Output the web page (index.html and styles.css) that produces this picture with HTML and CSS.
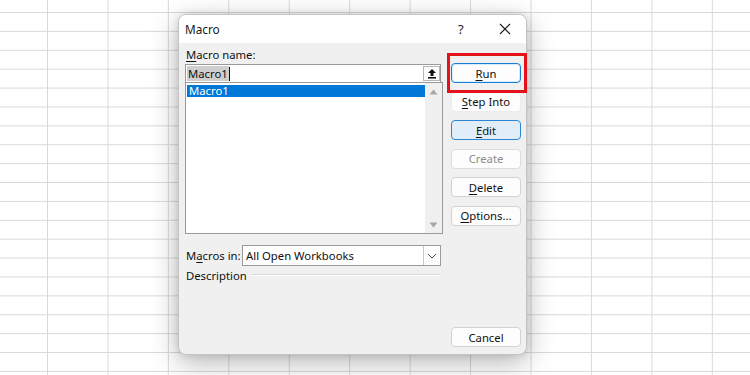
FILE: index.html
```html
<!DOCTYPE html>
<html>
<head>
<meta charset="utf-8">
<link rel="stylesheet" href="styles.css">
</head>
<body>
<div class="sheet">
  <div class="dialog">
    <div class="titlebar">
      <span class="title">Macro</span>
      <span class="help">?</span>
      <span class="close">
        <svg width="12" height="12" viewBox="0 0 12 12"><path d="M1 1 L11 11 M11 1 L1 11" stroke="#1a1a1a" stroke-width="1.1" fill="none"/></svg>
      </span>
    </div>
    <div class="body">
      <div class="left">
        <div class="label"><u>M</u>acro name:</div>
        <div class="input">
          <span class="sel">Macro1</span><span class="caret"></span>
          <span class="upbtn">
            <svg width="10" height="11" viewBox="0 0 10 11"><path d="M5 1 L1 5 H3.5 V8 H6.5 V5 H9 Z" fill="#111"/><rect x="1" y="9" width="8" height="1.6" fill="#111"/></svg>
          </span>
        </div>
        <div class="list">
          <div class="items">
            <div class="item selected">Macro1</div>
          </div>
          <div class="scroll">
            <svg width="9" height="6" viewBox="0 0 9 6"><path d="M0.5 5.5 L4.5 0.5 L8.5 5.5 Z" fill="#a6a6a6"/></svg>
            <svg width="9" height="6" viewBox="0 0 9 6"><path d="M0.5 0.5 L4.5 5.5 L8.5 0.5 Z" fill="#a6a6a6"/></svg>
          </div>
        </div>
        <div class="inrow">
          <span class="inlabel">M<u>a</u>cros in:</span>
          <div class="combo">
            <span class="combotext">All Open Workbooks</span>
            <span class="drop">
              <svg width="10" height="6" viewBox="0 0 10 6"><path d="M1 1 L5 5 L9 1" stroke="#555" stroke-width="1" fill="none"/></svg>
            </span>
          </div>
        </div>
        <div class="descrow">
          <span>Description</span>
          <span class="etch"></span>
        </div>
      </div>
      <div class="right">
        <div class="runwrap">
          <button class="btn run"><u>R</u>un</button>
          <span class="highlight"></span>
        </div>
        <button class="btn plain"><u>S</u>tep Into</button>
        <button class="btn edit"><u>E</u>dit</button>
        <button class="btn disabled">Create</button>
        <button class="btn"><u>D</u>elete</button>
        <button class="btn"><u>O</u>ptions...</button>
        <button class="btn cancel">Cancel</button>
      </div>
    </div>
  </div>
</div>
</body>
</html>
```

FILE: styles.css
```css
* { box-sizing: border-box; }
html, body { margin: 0; padding: 0; }
body {
  width: 750px;
  height: 375px;
  overflow: hidden;
  font-family: "Segoe UI", "Noto Sans", "Open Sans", sans-serif;
  font-size: 11.3px;
  color: #111;
  background-color: #fff;
  background-image:
    linear-gradient(to right, #d9d9d9 1px, transparent 1px),
    linear-gradient(to bottom, #d9d9d9 1px, transparent 1px);
  background-size: 60.45px 18.9px;
  background-position: 47px 12px;
}
.sheet {
  padding: 14px 0 0 178px;
}
.dialog {
  width: 349px;
  height: 341px;
  background: #f0f0f0;
  border: 1px solid #c4c4c4;
  border-radius: 8px;
  box-shadow: 0 8px 28px rgba(0,0,0,0.28), 0 0 8px rgba(0,0,0,0.12);
  display: flex;
  flex-direction: column;
}
.titlebar {
  height: 28px;
  background: #fff;
  border-radius: 7px 7px 0 0;
  display: flex;
  align-items: center;
  padding-left: 6px;
  flex: none;
}
.title { flex: 1; font-size: 11.8px; color: #1a1a1a; }
.help { width: 10px; font-size: 13px; margin-right: 31px; color: #1a1a1a; }
.close { width: 12px; height: 12px; margin-right: 15px; display: flex; }
.body {
  flex: 1;
  display: flex;
  padding: 0 5px 7px 6px;
  gap: 8px;
}
.left {
  width: 258px;
  display: flex;
  flex-direction: column;
}
.label {
  height: 16px;
  line-height: 16px;
  margin-top: 4px;
  margin-bottom: 1px;
  padding-left: 1px;
}
u { text-decoration-thickness: 1px; text-underline-offset: 2px; }
.input {
  width: 256px;
  height: 19px;
  background: #fff;
  border: 1px solid #9a9a9a;
  display: flex;
  align-items: center;
  padding-left: 1px;
}
.sel {
  background: #cfcfcf;
  line-height: 15px;
  height: 15px;
  padding: 0 1px;
}
.caret {
  width: 1px;
  height: 14px;
  background: #111;
}
.upbtn {
  margin-left: auto;
  width: 17px;
  height: 15px;
  border: 1px solid #b5b5b5;
  background: #fdfdfd;
  display: flex;
  align-items: center;
  justify-content: center;
}
.list {
  width: 258px;
  height: 152px;
  margin-top: -1px;
  background: #fff;
  border: 1px solid #9a9a9a;
  display: flex;
}
.items {
  flex: 1;
  padding: 2px 0 0 1px;
}
.item {
  height: 12px;
  line-height: 12px;
  padding-left: 2px;
}
.item.selected {
  background: #0078d7;
  color: #fff;
}
.scroll {
  width: 17px;
  background: #f0f0f0;
  display: flex;
  flex-direction: column;
  justify-content: space-between;
  align-items: center;
  padding: 6px 0 5px;
}
.inrow {
  display: flex;
  align-items: center;
  margin-top: 11px;
  height: 21px;
}
.inlabel {
  width: 57px;
  padding-left: 1px;
  white-space: nowrap;
}
.combo {
  width: 199px;
  height: 21px;
  background: #fff;
  border: 1px solid #9a9a9a;
  display: flex;
  align-items: center;
  padding-left: 3px;
}
.combotext { flex: 1; white-space: nowrap; }
.drop {
  width: 17px;
  height: 19px;
  border-left: 1px solid #c8c8c8;
  display: flex;
  align-items: center;
  justify-content: center;
}
.descrow {
  display: flex;
  align-items: center;
  height: 16px;
  margin-top: 1px;
  padding-left: 1px;
  gap: 5px;
}
.etch {
  flex: 1;
  height: 2px;
  border-top: 1px solid #d8d8d8;
  border-bottom: 1px solid #fff;
  margin-right: 2px;
}
.right {
  width: 70px;
  display: flex;
  flex-direction: column;
  gap: 8.5px;
  padding-top: 20px;
}
.btn {
  font-family: inherit;
  font-size: 11.3px;
  color: #111;
  width: 70px;
  height: 20px;
  background: #fdfdfd;
  border: 1px solid #d2d2d2;
  border-radius: 4px;
  padding: 0;
  line-height: 17px;
  white-space: nowrap;
}
.runwrap {
  position: relative;
  height: 20px;
}
.run {
  border: 1px solid #1a7fd4;
  box-shadow: inset 0 0 0 1px #d8ebfa;
}
.highlight {
  position: absolute;
  left: -4px;
  top: -10px;
  width: 80px;
  height: 40px;
  border: 3px solid #e3121b;
}
.plain { border-color: #ececec; }
.edit {
  background: #e1eefa;
  border: 1px solid #2b86d6;
}
.disabled {
  color: #8c8c8c;
  border-color: #dcdcdc;
}
.cancel { margin-top: auto; }
```
